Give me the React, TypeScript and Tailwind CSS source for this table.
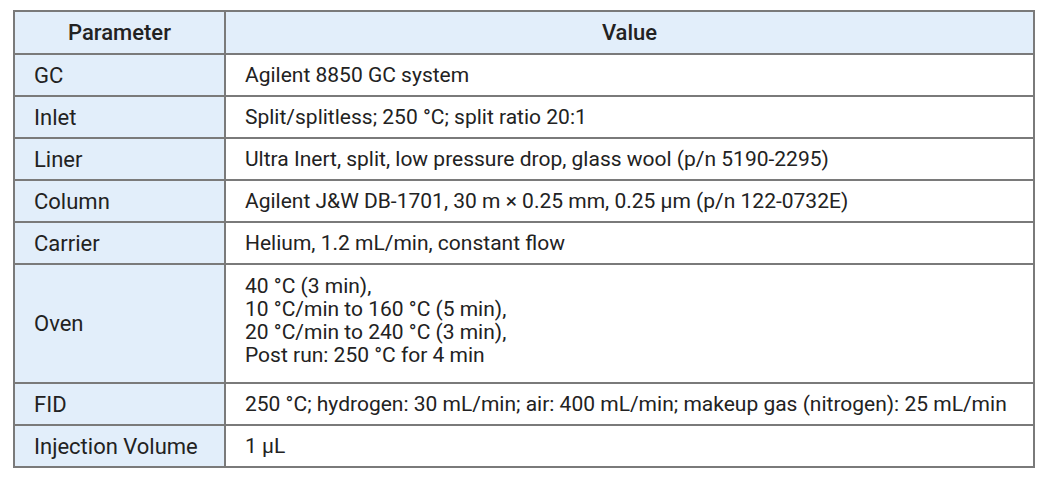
import React from "react";

const rows: { param: string; value: string[] }[] = [
  { param: "GC", value: ["Agilent 8850 GC system"] },
  { param: "Inlet", value: ["Split/splitless; 250 °C; split ratio 20:1"] },
  { param: "Liner", value: ["Ultra Inert, split, low pressure drop, glass wool (p/n 5190-2295)"] },
  { param: "Column", value: ["Agilent J&W DB-1701, 30 m × 0.25 mm, 0.25 µm (p/n 122-0732E)"] },
  { param: "Carrier", value: ["Helium, 1.2 mL/min, constant flow"] },
  {
    param: "Oven",
    value: [
      "40 °C (3 min),",
      "10 °C/min to 160 °C (5 min),",
      "20 °C/min to 240 °C (3 min),",
      "Post run: 250 °C for 4 min",
    ],
  },
  { param: "FID", value: ["250 °C; hydrogen: 30 mL/min; air: 400 mL/min; makeup gas (nitrogen): 25 mL/min"] },
  { param: "Injection Volume", value: ["1 µL"] },
];

const App = () => {
  return (
    <div
      className="w-[1047px] h-[478px] bg-white pt-[10px] pl-[13px] text-[#222222]"
      style={{ fontFamily: "Roboto, 'Liberation Sans', sans-serif" }}
    >
      <table className="w-[1022px] border-collapse text-[21px] leading-[23px]">
        <thead>
          <tr className="h-[43px] bg-[#e2eefa] text-[22px]">
            <th className="w-[211px] border-2 border-[#7a7a7a] font-medium text-center">Parameter</th>
            <th className="border-2 border-[#7a7a7a] font-medium text-center">Value</th>
          </tr>
        </thead>
        <tbody>
          {rows.map((r) => (
            <tr key={r.param} className={r.value.length > 1 ? "h-[119px]" : "h-[42px]"}>
              <td className="bg-[#e2eefa] border-2 border-[#7a7a7a] pl-[19px] align-middle text-[22px]">
                {r.param}
              </td>
              <td
                className={
                  r.value.length > 1
                    ? "border-2 border-[#7a7a7a] pl-[19px] pb-[6px] align-middle"
                    : "border-2 border-[#7a7a7a] pl-[19px] align-middle"
                }
              >
                {r.value.map((v) => (
                  <div key={v}>{v}</div>
                ))}
              </td>
            </tr>
          ))}
        </tbody>
      </table>
    </div>
  );
};

export default App;
